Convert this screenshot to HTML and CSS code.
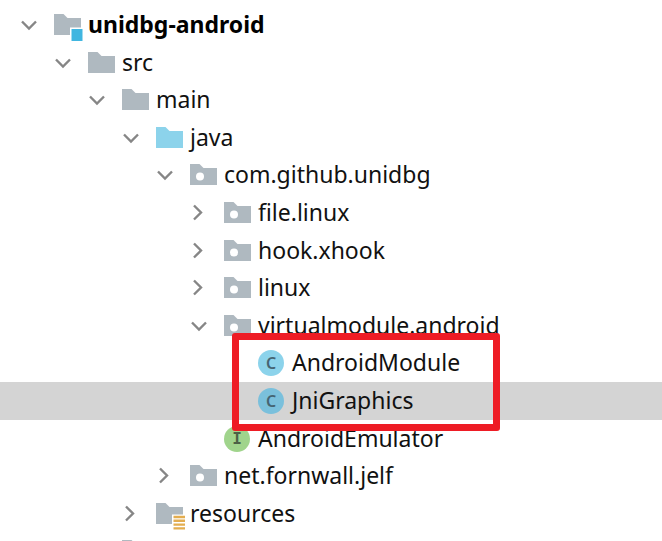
FILE: index.html
```html
<!DOCTYPE html>
<html lang="en">
<head>
<meta charset="utf-8">
<title>Project</title>
<link rel="stylesheet" href="styles.css">
</head>
<body>
<svg class="defs" aria-hidden="true">
  <symbol id="down" viewBox="0 0 18 18"><path d="M2 5.5 9 12.500 16 5.500" fill="none" stroke="#868686" stroke-width="2.4"/></symbol>
  <symbol id="right" viewBox="0 0 18 18"><path d="M4 1.500 11 8.500 4 15.500" fill="none" stroke="#868686" stroke-width="2.4"/></symbol>
  <symbol id="folder" viewBox="0 0 30 32"><path d="M0 5H9.500L13.500 9H27V26H0Z" fill="currentColor"/></symbol>
  <symbol id="package" viewBox="0 0 30 32"><path d="M0 5H9.500L13.500 9H27V26H0Z" fill="currentColor"/><circle cx="10" cy="17.500" r="4" fill="#fff"/></symbol>
  <symbol id="module" viewBox="0 0 30 32"><path d="M0 5H9.500L13.500 9H27V18.500H16V26H0Z" fill="currentColor"/><path d="M17.500 20H28.500V32H17.500Z" fill="#40b6e0"/></symbol>
  <symbol id="resource" viewBox="0 0 30 32"><path d="M0 5H9.500L13.500 9H27V16.500H16V26H0Z" fill="currentColor"/><path d="M17.500 19H29M17.500 22.800H29M17.500 26.600H29M17.500 30.400H29" stroke="#e3ad4f" stroke-width="2.4"/></symbol>
</svg>
<main class="project">
<ul class="tree">
  <li class="row level-0"><svg class="arrow"><use href="#down"/></svg><svg class="icon"><use href="#module"/></svg><span class="name bold">unidbg-android</span></li>
  <li class="row level-1"><svg class="arrow"><use href="#down"/></svg><svg class="icon"><use href="#folder"/></svg><span class="name">src</span></li>
  <li class="row level-2"><svg class="arrow"><use href="#down"/></svg><svg class="icon"><use href="#folder"/></svg><span class="name">main</span></li>
  <li class="row level-3"><svg class="arrow"><use href="#down"/></svg><svg class="icon source"><use href="#folder"/></svg><span class="name">java</span></li>
  <li class="row level-4"><svg class="arrow"><use href="#down"/></svg><svg class="icon"><use href="#package"/></svg><span class="name">com.github.unidbg</span></li>
  <li class="row level-5"><svg class="arrow"><use href="#right"/></svg><svg class="icon"><use href="#package"/></svg><span class="name">file.linux</span></li>
  <li class="row level-5"><svg class="arrow"><use href="#right"/></svg><svg class="icon"><use href="#package"/></svg><span class="name">hook.xhook</span></li>
  <li class="row level-5"><svg class="arrow"><use href="#right"/></svg><svg class="icon"><use href="#package"/></svg><span class="name">linux</span></li>
  <li class="row level-5"><svg class="arrow"><use href="#down"/></svg><svg class="icon"><use href="#package"/></svg><span class="name">virtualmodule.android</span></li>
  <li class="row level-6"><span class="arrow"></span><span class="type class">C</span><span class="name">AndroidModule</span></li>
  <li class="row level-6 selected"><span class="arrow"></span><span class="type class">C</span><span class="name">JniGraphics</span></li>
  <li class="row level-5"><span class="arrow"></span><span class="type interface">I</span><span class="name">AndroidEmulator</span></li>
  <li class="row level-4"><svg class="arrow"><use href="#right"/></svg><svg class="icon"><use href="#package"/></svg><span class="name">net.fornwall.jelf</span></li>
  <li class="row level-3"><svg class="arrow"><use href="#right"/></svg><svg class="icon"><use href="#resource"/></svg><span class="name">resources</span></li>
  <li class="row level-2"><span class="arrow"></span><svg class="icon"><use href="#folder"/></svg></li>
</ul>
<div class="highlight"></div>
</main>
</body>
</html>
```

FILE: styles.css
```css
body {
  margin: 0;
  background: #fff;
  color: #111;
  font-family: "Noto Sans", "Open Sans", sans-serif;
  font-size: 23px;
}

.defs {
  position: absolute;
  width: 0;
  height: 0;
}

.project {
  position: relative;
  height: 100vh;
  overflow: hidden;
}

.tree {
  margin: 0;
  padding: 6px 0 0;
  list-style: none;
}

.row {
  --level: 0;
  display: flex;
  align-items: center;
  height: 38px;
  padding-left: calc(20px + var(--level) * 34px);
  white-space: nowrap;
}

/* Five rows span 188px. */
.row:nth-child(5n + 2),
.row:nth-child(5n + 4) {
  height: 37px;
}

.level-1 { --level: 1; }
.level-2 { --level: 2; }
.level-3 { --level: 3; }
.level-4 { --level: 4; }
.level-5 { --level: 5; }
.level-6 { --level: 6; }

.selected {
  background: #d4d4d4;
}

.arrow {
  flex: none;
  width: 18px;
  height: 18px;
  margin-right: 16px;
}

.icon {
  flex: none;
  width: 30px;
  height: 32px;
  margin-right: 4px;
  color: #afb9c0;
}

.source {
  color: #8cd3eb;
}

.type {
  flex: none;
  box-sizing: border-box;
  width: 26px;
  height: 26px;
  margin-right: 8px;
  border-radius: 50%;
  color: #456574;
  font-size: 16px;
  font-weight: 600;
  line-height: 26px;
  text-align: center;
}

.class {
  background: #8cd3eb;
}

.selected .class {
  background: #7ac0dc;
}

.interface {
  background: #a0d48c;
  color: #4c6046;
  font-family: "DejaVu Sans Mono", monospace;
}

.name {
  padding-bottom: 2px;
  line-height: 34px;
}

.bold {
  color: #000;
  font-weight: 700;
}

.highlight {
  position: absolute;
  top: 333px;
  left: 232px;
  box-sizing: border-box;
  width: 268px;
  height: 98px;
  border: 7px solid #ee1c25;
  border-radius: 3px;
}
```
